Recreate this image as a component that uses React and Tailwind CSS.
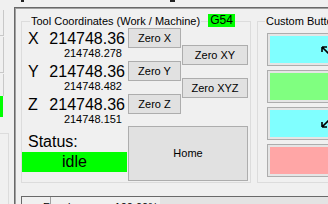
import React from 'react';

function WinButton({ className = '', children }) {
  return (
    <div className={`border border-[#adadad] bg-[#e1e1e1] text-[11px] leading-[13px] flex items-center justify-center ${className}`}>
      {children}
    </div>
  );
}

function CoordRow({ axis, work, machine, first }) {
  return (
    <div className={first ? '' : 'mt-[4px]'}>
      <div className="flex justify-between text-[16px] leading-[16px]">
        <span>{axis}</span>
        <span>{work}</span>
      </div>
      <div className="text-right text-[11px] leading-[13px] pr-[3px]">{machine}</div>
    </div>
  );
}

function ArrowUpLeft() {
  return (
    <svg width="8" height="8" viewBox="0 0 8 8" className="block">
      <path d="M1 1 L1 6 M1 1 L6 1 M1 1 L7.5 7.5" stroke="#000" strokeWidth="1.6" fill="none" />
    </svg>
  );
}

function ArrowDownLeft() {
  return (
    <svg width="8" height="8" viewBox="0 0 8 8" className="block">
      <path d="M1 7 L1 2 M1 7 L6 7 M1 7 L7.5 0.5" stroke="#000" strokeWidth="1.6" fill="none" />
    </svg>
  );
}

const customButtons = [
  { color: 'bg-[#80ffff]', icon: <ArrowUpLeft /> },
  { color: 'bg-[#80ff80]', icon: null },
  { color: 'bg-[#80ffff]', icon: <ArrowDownLeft /> },
  { color: 'bg-[#ffa6a6]', icon: null },
];

export default function App() {
  return (
    <div className="w-[328px] h-[204px] overflow-hidden bg-[#f0f0f0] text-black flex flex-col font-[family-name:'Liberation_Sans',Arial,sans-serif]">
      {/* cut-off bits of the control above */}
      <div className="h-[7px] shrink-0 flex items-start">
        <div className="ml-[21px] w-[3px] h-[2px] bg-[#222]" />
        <div className="ml-[146px] w-[5px] h-[2px] bg-[#222]" />
      </div>

      <div className="flex-1 flex min-h-0">
        {/* left strip, neighbouring panel */}
        <div className="w-[14px] shrink-0 flex flex-col">
          <div className="mt-[3px] w-[4px] h-[26px] border-r border-b border-[#c8c8c8]" />
          <div className="mt-[1px] w-[4px] h-[36px] border-r border-b border-[#c8c8c8]" />
          <div className="mt-[1px] w-[4px] h-[22px] border-r border-[#c8c8c8]" />
          <div className="w-[3px] h-[21px] bg-[#00ff00]" />
          <div className="mt-[16px] w-[9px] flex-1 border-t border-r border-[#dcdcdc]" />
        </div>

        {/* main panel */}
        <div className="flex-1 min-w-0 flex flex-col border-t border-l border-[#696969] shadow-[inset_1px_1px_0_#a0a0a0]">
          <div className="flex gap-[6px] pl-[6px] mt-[13px] shrink-0">
            {/* Tool Coordinates group */}
            <div className="relative shrink-0 w-[230px] h-[162px] border border-[#dcdcdc]">
              <span className="absolute left-[8px] -top-[8px] px-[1px] bg-[#f0f0f0] text-[11px] leading-[14px] whitespace-nowrap">
                Tool Coordinates (Work / Machine)
              </span>
              <span className="absolute left-[186px] -top-[8px] w-[27px] h-[13px] bg-[#00ff00] text-[12px] leading-[13px] text-center">
                G54
              </span>

              <div className="flex">
                <div className="w-[106px] flex flex-col">
                  <div className="pl-[6px] pt-[9px] w-[103px]">
                    <CoordRow axis="X" work="214748.36" machine="214748.278" first />
                    <CoordRow axis="Y" work="214748.36" machine="214748.482" />
                    <CoordRow axis="Z" work="214748.36" machine="214748.151" />
                  </div>
                  <div className="pl-[6px] mt-[8px] text-[16px] leading-[16px]">Status:</div>
                  <div className="mt-[2px] w-[105px] h-[20px] bg-[#00ff00] text-center text-[16px] leading-[20px]">idle</div>
                </div>

                <div className="w-[120px] flex flex-col">
                  <div className="flex gap-[1px]">
                    <div className="w-[53px] pt-[6px] flex flex-col gap-[13px]">
                      <WinButton className="h-[20px]">Zero X</WinButton>
                      <WinButton className="h-[20px]">Zero Y</WinButton>
                      <WinButton className="h-[20px]">Zero Z</WinButton>
                    </div>
                    <div className="w-[66px] pt-[23px] flex flex-col gap-[13px]">
                      <WinButton className="h-[20px]">Zero XY</WinButton>
                      <WinButton className="h-[20px]">Zero XYZ</WinButton>
                    </div>
                  </div>
                  <WinButton className="mt-[12px] h-[55px]">Home</WinButton>
                </div>
              </div>
            </div>

            {/* Custom Buttons group */}
            <div className="relative shrink-0 w-[90px] h-[162px] border border-[#dcdcdc]">
              <span className="absolute left-[7px] -top-[8px] px-[1px] bg-[#f0f0f0] text-[11px] leading-[14px] whitespace-nowrap">
                Custom Buttons
              </span>
              <div className="pl-[9px] pt-[11px] flex flex-col gap-[4px]">
                {customButtons.map((b, i) => (
                  <div key={i} className="w-[80px] h-[33px] border border-[#adadad] bg-[#e5e5e5] p-[2px]">
                    <div className={`h-full ${b.color} flex items-center pl-[51px]`}>{b.icon}</div>
                  </div>
                ))}
              </div>
            </div>
          </div>

          {/* grid below, mostly cut off */}
          <div className="ml-[6px] mt-[13px] flex-1 flex border-t border-l border-[#696969] bg-[#e3e3e3] text-[11px] leading-[13px]">
            <div className="w-[29px] shrink-0 border-r border-[#a0a0a0] bg-[#f0f0f0] pl-[21px] pt-[4px]">F</div>
            <div className="flex-1 bg-[#f0f0f0] pt-[4px] flex">
              <span className="ml-[17px]">in</span>
              <span className="ml-[38px]">100.00%</span>
            </div>
            <div className="w-[168px] shrink-0" />
          </div>
        </div>
      </div>
    </div>
  );
}
